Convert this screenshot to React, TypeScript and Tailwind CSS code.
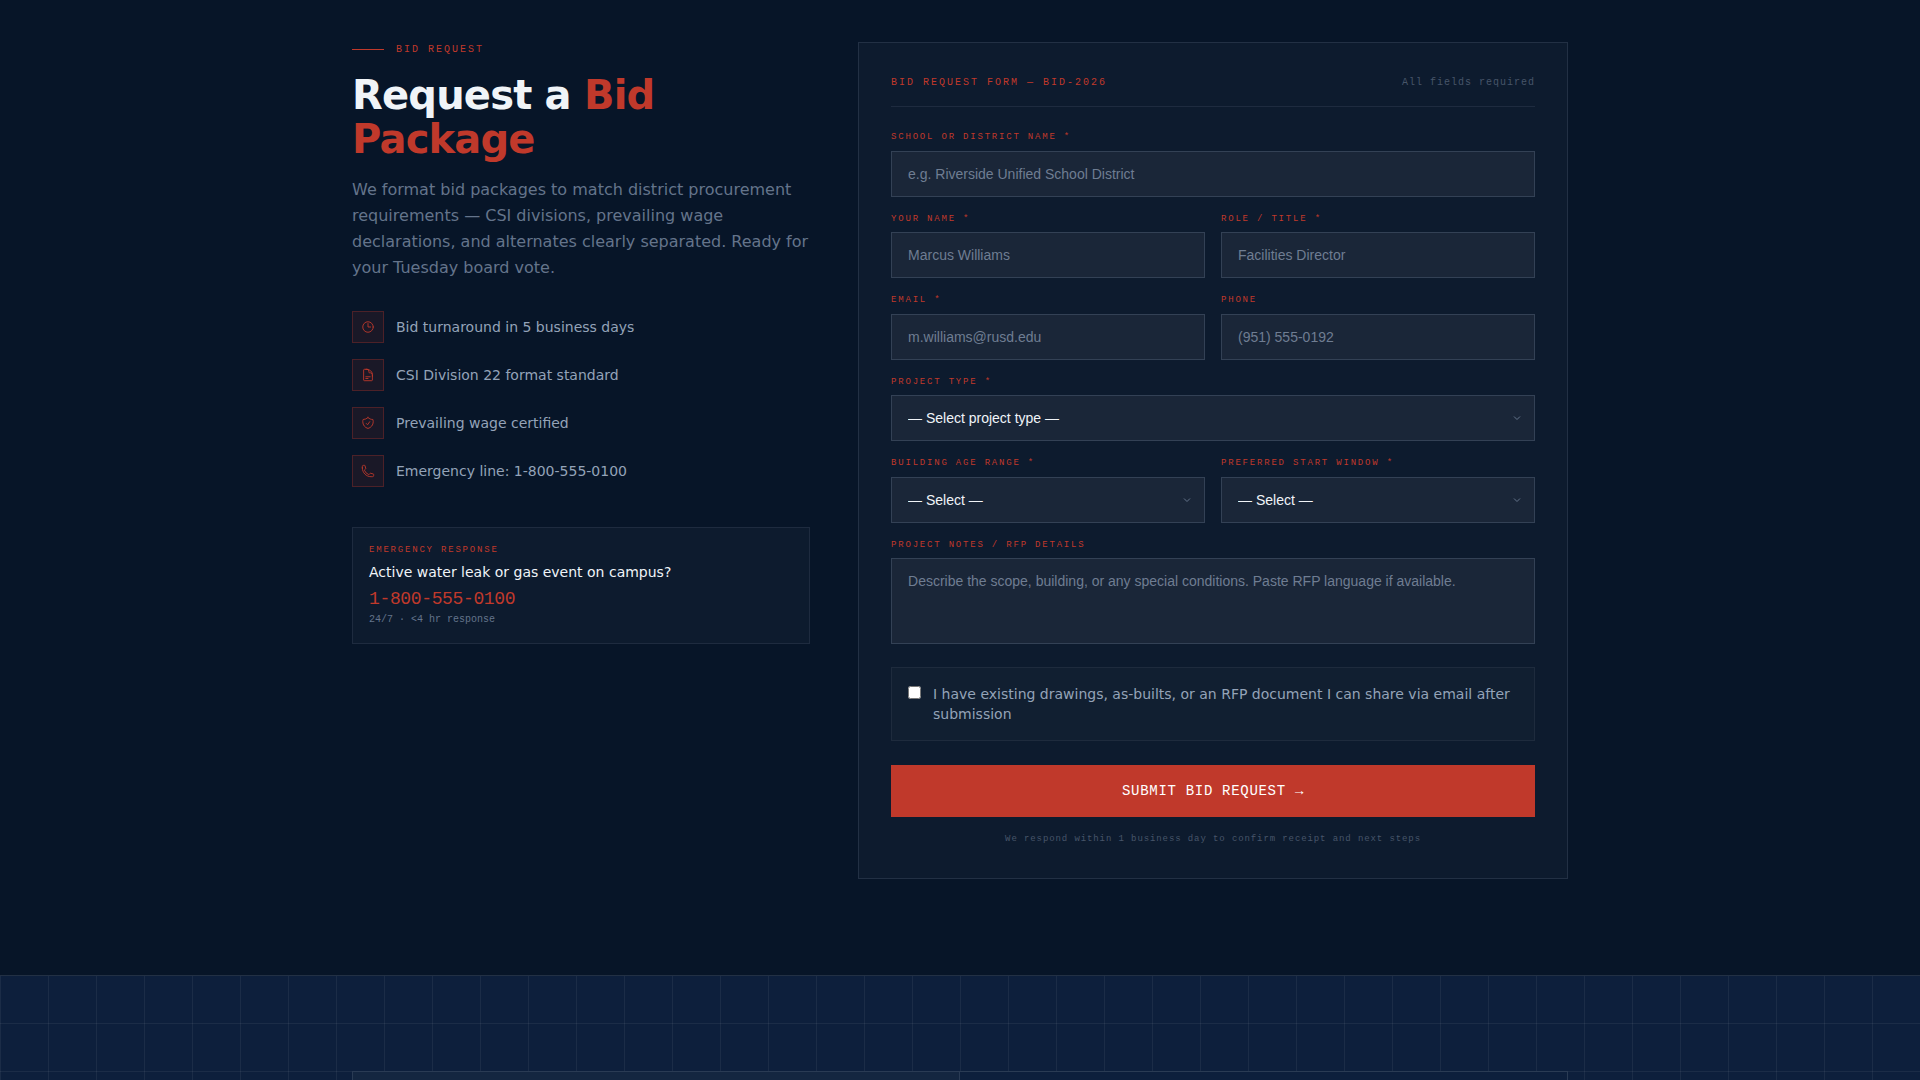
import type { ReactNode } from "react";
import {
  HiOutlineClock,
  HiOutlineDocumentText,
  HiOutlinePhone,
  HiOutlineShieldCheck,
} from "react-icons/hi2";

const control =
  "block w-full rounded-none border border-[#334155] bg-[#1a2638] px-4 py-3 text-[14px] leading-5 text-[#f0f4f8] placeholder:text-[#6f7d92] font-['Liberation_Sans',Arial,sans-serif] outline-none focus:border-[#c0392b]";

function Field({ id, label, children }: { id: string; label: string; children: ReactNode }) {
  return (
    <div className="min-w-0">
      <label
        htmlFor={id}
        className="mb-1.5 block font-['Liberation_Mono',monospace] text-[9px] leading-normal tracking-[0.2em] text-[#c0392b] uppercase"
      >
        {label}
      </label>
      {children}
    </div>
  );
}

function TextField({ id, label, placeholder, type = "text" }: { id: string; label: string; placeholder: string; type?: string }) {
  return (
    <Field id={id} label={label}>
      <input id={id} name={id} type={type} placeholder={placeholder} className={control} />
    </Field>
  );
}

function SelectField({ id, label, prompt, options }: { id: string; label: string; prompt: string; options: string[] }) {
  return (
    <Field id={id} label={label}>
      <div className="relative">
        <select id={id} name={id} defaultValue="" className={`${control} appearance-none`}>
          <option value="">{prompt}</option>
          {options.map((option) => (
            <option key={option}>{option}</option>
          ))}
        </select>
        <svg
          viewBox="0 0 12 12"
          className="pointer-events-none absolute top-1/2 right-3 size-3 -translate-y-1/2 text-[#64748b]"
          fill="none"
          stroke="currentColor"
          aria-hidden="true"
        >
          <path d="M3 4.5l3 3 3-3" />
        </svg>
      </div>
    </Field>
  );
}

const points = [
  { Icon: HiOutlineClock, text: "Bid turnaround in 5 business days" },
  { Icon: HiOutlineDocumentText, text: "CSI Division 22 format standard" },
  { Icon: HiOutlineShieldCheck, text: "Prevailing wage certified" },
  { Icon: HiOutlinePhone, text: "Emergency line: 1-800-555-0100" },
];

function Intro() {
  return (
    <div className="min-w-0">
      <div className="mb-4 flex items-center gap-3">
        <span className="h-px w-8 bg-[#c0392b]" />
        <span className="font-['Liberation_Mono',monospace] text-[10px] leading-normal tracking-[0.2em] text-[#c0392b] uppercase">
          Bid Request
        </span>
      </div>
      <h1 className="text-[40px] leading-[44px] font-bold tracking-[-0.02em] text-[#f0f4f8]">
        Request a <span className="text-[#c0392b]">Bid Package</span>
      </h1>
      <p className="mt-4 text-base leading-relaxed text-[#64748b]">
        We format bid packages to match district procurement requirements — CSI divisions, prevailing wage declarations, and
        alternates clearly separated. Ready for your Tuesday board vote.
      </p>
      <ul className="mt-[30px] flex flex-col gap-4">
        {points.map(({ Icon, text }) => (
          <li key={text} className="flex items-center gap-3 text-[14px] leading-5 text-[#94a3b8]">
            <span className="flex size-8 shrink-0 items-center justify-center border border-[#c0392b]/30 bg-[#c0392b]/10 text-[#c0392b]">
              <Icon className="size-3.5" aria-hidden="true" />
            </span>
            {text}
          </li>
        ))}
      </ul>
      <aside className="mt-10 border border-[#1e2b3f] bg-[#0d1b2e] p-4">
        <p className="mb-1 font-['Liberation_Mono',monospace] text-[9px] leading-normal tracking-[0.2em] text-[#c0392b] uppercase">
          Emergency Response
        </p>
        <p className="text-[14px] leading-[21px] text-[#f0f4f8]">Active water leak or gas event on campus?</p>
        <a
          href="tel:18005550100"
          className="mt-1 block font-['Liberation_Mono',monospace] text-[18px] leading-[25px] tracking-[-0.02em] text-[#c0392b]"
        >
          1-800-555-0100
        </a>
        <p className="font-['Liberation_Mono',monospace] text-[10px] leading-normal text-[#64748b]">24/7 · &lt;4 hr response</p>
      </aside>
    </div>
  );
}

function BidForm() {
  return (
    <form className="min-w-0 border border-[#223044] bg-[#0d1b2e] p-8 pb-[31px]" onSubmit={(event) => event.preventDefault()}>
      <div className="mb-6 flex items-center justify-between border-b border-[#1e2b3f] pb-4 font-['Liberation_Mono',monospace] text-[10px] leading-normal">
        <h2 className="tracking-[0.2em] text-[#c0392b]">BID REQUEST FORM — BID-2026</h2>
        <span className="tracking-[0.1em] text-[#475569]">All fields required</span>
      </div>
      <div className="flex flex-col gap-4">
        <TextField id="district" label="School or District Name *" placeholder="e.g. Riverside Unified School District" />
        <div className="grid grid-cols-2 gap-4">
          <TextField id="name" label="Your Name *" placeholder="Marcus Williams" />
          <TextField id="role" label="Role / Title *" placeholder="Facilities Director" />
        </div>
        <div className="grid grid-cols-2 gap-4">
          <TextField id="email" type="email" label="Email *" placeholder="m.williams@rusd.edu" />
          <TextField id="phone" type="tel" label="Phone" placeholder="(951) 555-0192" />
        </div>
        <SelectField
          id="project"
          label="Project Type *"
          prompt="— Select project type —"
          options={["Repipe", "Fixture replacement", "Gas line", "Backflow"]}
        />
        <div className="grid grid-cols-2 gap-4">
          <SelectField id="age" label="Building Age Range *" prompt="— Select —" options={["Pre-1960", "1960–1989", "1990 or later"]} />
          <SelectField id="start" label="Preferred Start Window *" prompt="— Select —" options={["Summer break", "Winter break", "Flexible"]} />
        </div>
        <Field id="notes" label="Project Notes / RFP Details">
          <textarea
            id="notes"
            name="notes"
            rows={3}
            placeholder="Describe the scope, building, or any special conditions. Paste RFP language if available."
            className={`${control} resize-none`}
          />
        </Field>
      </div>
      <div className="mt-[23px] flex items-start gap-3 border border-[#1e2b3d] bg-[#111f31] p-4">
        <input id="drawings" name="drawings" type="checkbox" className="mt-0.5 size-[13px] shrink-0 accent-[#c0392b]" />
        <label htmlFor="drawings" className="text-[14px] leading-5 text-[#94a3b8]">
          I have existing drawings, as-builts, or an RFP document I can share via email after submission
        </label>
      </div>
      <button
        type="submit"
        className="mt-6 block w-full bg-[#c0392b] py-4 font-['Liberation_Mono',monospace] text-[14px] leading-5 tracking-[0.05em] text-white uppercase"
      >
        Submit Bid Request →
      </button>
      <p className="mt-4 text-center font-['Liberation_Mono',monospace] text-[9px] leading-normal tracking-[0.1em] text-[#475569]">
        We respond within 1 business day to confirm receipt and next steps
      </p>
    </form>
  );
}

export default function App() {
  return (
    <main className="flex min-h-screen flex-col bg-[#071528] font-['DejaVu_Sans',sans-serif]">
      <section className="pt-[42px] pb-24">
        <div className="mx-auto grid max-w-7xl grid-cols-[1fr_1.55fr] items-start gap-12 px-8">
          <Intro />
          <BidForm />
        </div>
      </section>
      <section className="flex flex-1 flex-col border-t border-[#223044] bg-[#0d1f3c] bg-[linear-gradient(rgba(255,255,255,0.06)_1px,transparent_1px),linear-gradient(90deg,rgba(255,255,255,0.06)_1px,transparent_1px)] bg-size-[48px_48px] bg-origin-border pt-[95px]">
        <div className="mx-auto flex w-full max-w-7xl flex-1 px-8">
          <div className="grid flex-1 grid-cols-2 border-x border-t border-[#2a3b54]">
            <div className="border-r border-[#2a3b54] bg-[#142640]" />
            <div className="bg-[#0d1f3c]" />
          </div>
        </div>
      </section>
    </main>
  );
}
